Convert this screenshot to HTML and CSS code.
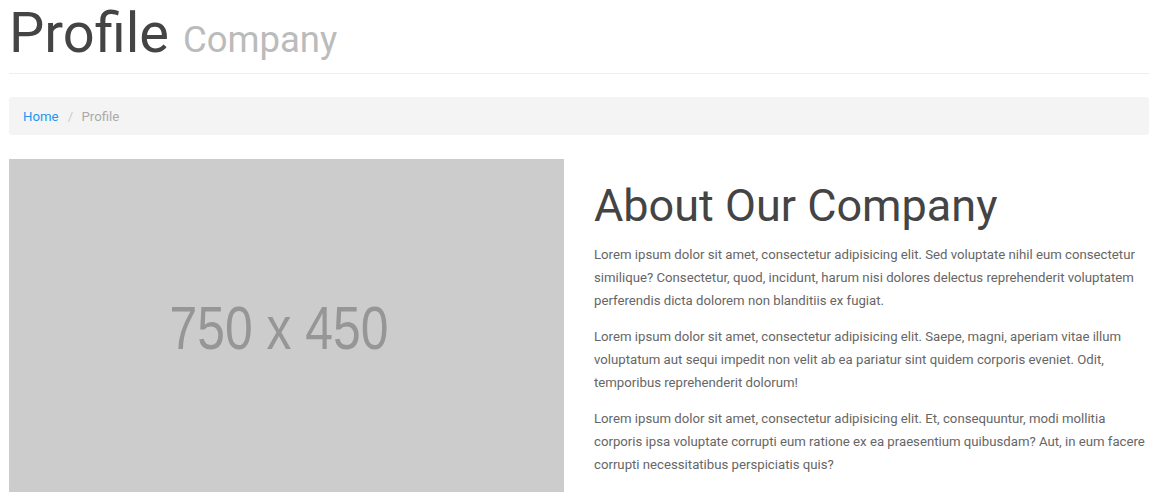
FILE: index.html
```html
<!DOCTYPE html>
<html lang="en">
<head>
<meta charset="utf-8">
<title>Profile - Company</title>
<link rel="stylesheet" href="styles.css">
</head>
<body>
<div class="container">
  <header class="page-header">
    <h1 class="page-title">Profile <small>Company</small></h1>
  </header>
  <nav class="breadcrumb">
    <a href="#" class="crumb-link">Home</a>
    <span class="crumb-sep">/</span>
    <span class="crumb-active">Profile</span>
  </nav>
  <section class="about">
    <div class="placeholder">
      <svg class="placeholder-svg" viewBox="0 0 555 333" width="555" height="333">
        <rect width="555" height="333" fill="#cccccc"/>
        <text x="270" y="190" text-anchor="middle" font-family="Liberation Sans, Arial, sans-serif" font-size="62" fill="#969696" textLength="219" lengthAdjust="spacingAndGlyphs">750 x 450</text>
      </svg>
    </div>
    <div class="about-text">
      <h2 class="about-title">About Our Company</h2>
      <p>Lorem ipsum dolor sit amet, consectetur adipisicing elit. Sed voluptate nihil eum consectetur similique? Consectetur, quod, incidunt, harum nisi dolores delectus reprehenderit voluptatem perferendis dicta dolorem non blanditiis ex fugiat.</p>
      <p>Lorem ipsum dolor sit amet, consectetur adipisicing elit. Saepe, magni, aperiam vitae illum voluptatum aut sequi impedit non velit ab ea pariatur sint quidem corporis eveniet. Odit, temporibus reprehenderit dolorum!</p>
      <p>Lorem ipsum dolor sit amet, consectetur adipisicing elit. Et, consequuntur, modi mollitia corporis ipsa voluptate corrupti eum ratione ex ea praesentium quibusdam? Aut, in eum facere corrupti necessitatibus perspiciatis quis?</p>
    </div>
  </section>
</div>
</body>
</html>
```
FILE: styles.css
```css
html, body {
  margin: 0;
  padding: 0;
  background: #fff;
}
body {
  font-family: Roboto, "Liberation Sans", Arial, sans-serif;
  font-size: 13.2px;
  color: #666;
}
.container {
  width: 1140px;
  padding-left: 9px;
}
.page-header {
  border-bottom: 1px solid #eeeeee;
  padding-bottom: 6px;
}
.page-title {
  margin: 0;
  font-size: 56px;
  font-weight: 400;
  line-height: 1.2;
  color: #444;
}
.page-title small {
  font-size: 36.5px;
  color: #bbb;
  font-weight: 400;
}
.breadcrumb {
  margin: 23px 0 24px;
  background: #f4f4f4;
  border-radius: 3px;
  padding: 13px 14px 11px;
  line-height: 14px;
  height: 14px;
  font-size: 13.2px;
}
.crumb-link {
  color: #2196f3;
  text-decoration: none;
}
.crumb-sep {
  color: #ccc;
  padding: 0 5px 0 6px;
}
.crumb-active {
  color: #aaa;
}
.about {
  display: grid;
  grid-template-columns: 555px 555px;
  column-gap: 30px;
}
.placeholder-svg {
  display: block;
}
.about-title {
  margin: 20px 0 10px;
  font-size: 45px;
  font-weight: 400;
  line-height: 1.2;
  color: #444;
}
.about-text p {
  margin: 0 0 13px;
  line-height: 23px;
}
```
